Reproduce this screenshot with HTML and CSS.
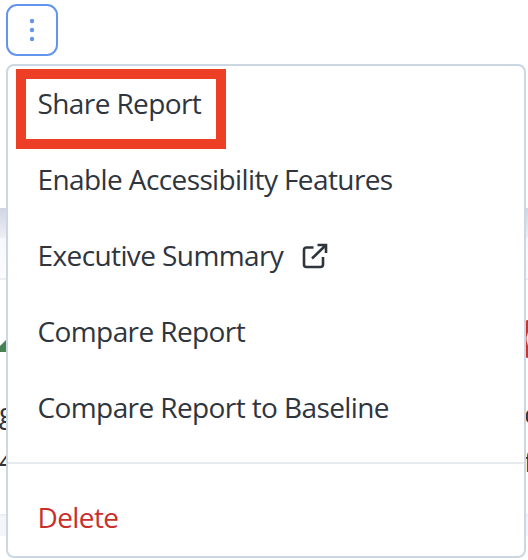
FILE: index.html
```html
<!DOCTYPE html>
<html lang="en">
	<head>
		<title>Report</title>
		<meta charset="UTF-8">
		<link rel="stylesheet" href="styles.css">
	</head>
	<body>
		<div class="toolbar">
			<button class="menu-button" aria-label="More actions">
				<svg width="6" height="24" viewBox="0 0 6 24">
					<circle cx="3" cy="3" r="2.2" />
					<circle cx="3" cy="12" r="2.2" />
					<circle cx="3" cy="21" r="2.2" />
				</svg>
			</button>
		</div>

		<div class="report">
			<div class="report-header"></div>
			<div class="report-tabs"></div>
			<div class="report-cards">
				<div class="card card-left">
					<svg class="triangle" width="30" height="30" viewBox="0 0 30 30"><path d="M30 0V30H0z" /></svg>
					<div class="label">g</div>
					<div class="value">4</div>
				</div>
				<div class="card card-right">
					<svg class="alert" width="30" height="38" viewBox="0 0 30 38">
						<rect width="30" height="38" rx="3" />
						<ellipse cx="15" cy="19" rx="13.500" ry="14" />
					</svg>
					<div class="label">o</div>
					<div class="value">f</div>
				</div>
			</div>
			<div class="report-footer"></div>
		</div>

		<div class="menu">
			<a class="menu-item"><span class="highlight">Share Report</span></a>
			<a class="menu-item">Enable Accessibility Features</a>
			<a class="menu-item">Executive Summary
				<svg class="external" width="26" height="26" viewBox="0 0 26 26">
					<path d="M11.5 4.5H4.5Q2 4.5 2 7V21.500Q2 24 4.500 24H18.500Q21 24 21 21.500V14" />
					<path d="M10 15.500L24 2M15.500 2H24V10" />
				</svg>
			</a>
			<a class="menu-item">Compare Report</a>
			<a class="menu-item">Compare Report to Baseline</a>
			<hr>
			<a class="menu-item delete">Delete</a>
		</div>
	</body>
</html>
```
FILE: styles.css
```css
body {
	margin: 0;
	height: 560px;
	overflow: hidden;
	background: #fff;
	color: #2f353d;
	font-family: "Open Sans", "Noto Sans", sans-serif;
	font-size: 28px;
}

.toolbar {
	box-sizing: border-box;
	height: 208px;
	padding: 4px 6px;
}

.menu-button {
	display: flex;
	align-items: center;
	justify-content: center;
	box-sizing: border-box;
	width: 52px;
	height: 52px;
	padding: 0;
	background: #fff;
	border: 2px solid #6495ed;
	border-radius: 11px;
}

.menu-button svg {
	fill: #6495ed;
}

.report-header {
	height: 30px;
	background: linear-gradient(to bottom, #d0d5e4, #eef0f6);
}

.report-tabs {
	height: 40px;
	background: linear-gradient(to bottom, #f7f8fc, #fcfcfe);
	border-bottom: 2px solid #eceef4;
}

.report-cards {
	display: flex;
	justify-content: space-between;
	height: 234px;
}

.card {
	width: 20px;
	overflow: hidden;
	line-height: 46px;
}

.card-right {
	width: 3px;
}

.triangle {
	display: block;
	margin: 42px 0 0 -6px;
	fill: #468254;
}

.alert {
	display: block;
	margin-top: 40px;
	fill: #d2322d;
}

.alert ellipse {
	fill: #fff;
}

.label {
	margin: 37px 0 0 -1px;
}

.value {
	margin: 2px 0 0 -1px;
}

.card-right .label {
	margin-top: 32px;
}

.report-footer {
	height: 20px;
	background: #f5f6fb;
	border-top: 2px solid #eceef4;
}

.menu {
	position: absolute;
	top: 64px;
	left: 6px;
	box-sizing: border-box;
	width: 520px;
	height: 494px;
	background: #fff;
	border: 2px solid #cbd7e3;
	border-radius: 8px;
}

.menu-item {
	display: flex;
	align-items: center;
	box-sizing: border-box;
	height: 76px;
	padding: 0 0 2px 29.5px;
	letter-spacing: -0.6px;
	white-space: nowrap;
}

.highlight {
	box-sizing: border-box;
	width: 210px;
	height: 80px;
	margin: 11px 0 0 -21.5px;
	padding-left: 11.5px;
	line-height: 48px;
	border: 10px solid #ec3f26;
}

.external {
	margin: 2px 0 0 19px;
	fill: none;
	stroke: #2f353d;
	stroke-width: 2.6;
}

.menu hr {
	height: 2px;
	margin: 16px 0;
	background: #e6ebf0;
	border: 0;
}

.delete {
	color: #c9302c;
}
```
